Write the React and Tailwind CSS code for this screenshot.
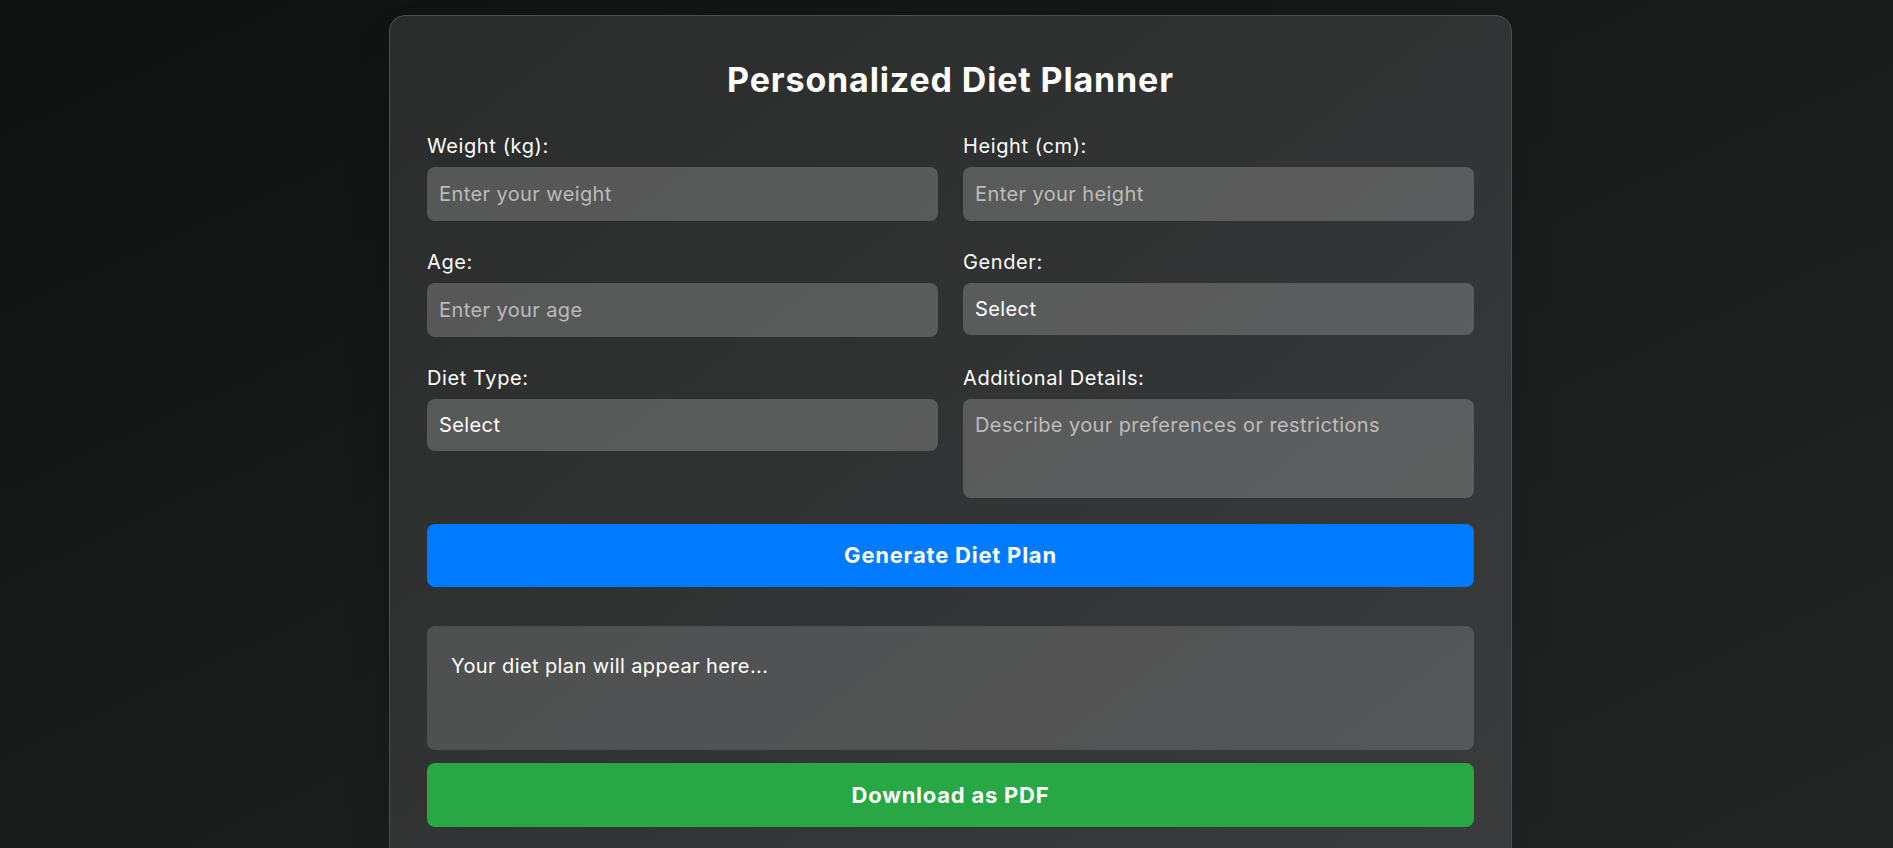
import { useState } from "react";

const font = { fontFamily: 'Inter, "Open Sans", sans-serif' };

function Field({ label, children }) {
  return (
    <div className="flex flex-col">
      <label className="text-[20px] leading-[28px] tracking-[0.03em] text-white mb-[7px]">{label}</label>
      {children}
    </div>
  );
}

export default function App() {
  const [form, setForm] = useState({ weight: "", height: "", age: "", gender: "", diet: "", details: "" });
  const set = (k) => (e) => setForm({ ...form, [k]: e.target.value });

  const inputCls =
    "h-[54px] w-full rounded-lg bg-white/20 px-3 text-[20px] tracking-[0.02em] text-white placeholder:text-white/60 outline-none";
  const selectCls =
    "h-[52px] w-full appearance-none rounded-lg bg-white/20 px-3 text-[20px] tracking-[0.02em] text-white outline-none";

  return (
    <div
      className="min-h-screen bg-gradient-to-br from-[#101111] to-[#242525] pl-[8px] pt-[15px] flex justify-center items-start"
      style={font}
    >
      <div className="w-[1123px] rounded-2xl border border-[#4d4e4e] bg-gradient-to-br from-[#2a2b2b] to-[#3a3b3c] px-[37px] pt-[40px] pb-10 shadow-2xl">
        <h1 className="text-center text-[34px] leading-[48px] tracking-[0.025em] font-bold text-white mb-[28px]">
          Personalized Diet Planner
        </h1>

        <div className="grid grid-cols-2 gap-x-[25px] gap-y-[27px] items-start">
          <Field label="Weight (kg):">
            <input className={inputCls} placeholder="Enter your weight" value={form.weight} onChange={set("weight")} />
          </Field>
          <Field label="Height (cm):">
            <input className={inputCls} placeholder="Enter your height" value={form.height} onChange={set("height")} />
          </Field>
          <Field label="Age:">
            <input className={inputCls} placeholder="Enter your age" value={form.age} onChange={set("age")} />
          </Field>
          <Field label="Gender:">
            <select className={selectCls} value={form.gender} onChange={set("gender")}>
              <option value="">Select</option>
              <option value="male">Male</option>
              <option value="female">Female</option>
            </select>
          </Field>
          <Field label="Diet Type:">
            <select className={selectCls} value={form.diet} onChange={set("diet")}>
              <option value="">Select</option>
              <option value="veg">Vegetarian</option>
              <option value="nonveg">Non-Vegetarian</option>
              <option value="vegan">Vegan</option>
            </select>
          </Field>
          <Field label="Additional Details:">
            <textarea
              className="h-[99px] w-full resize-none rounded-lg bg-white/20 px-3 py-[12px] text-[20px] leading-[28px] tracking-[0.02em] text-white placeholder:text-white/60 outline-none"
              placeholder="Describe your preferences or restrictions"
              value={form.details}
              onChange={set("details")}
            />
          </Field>
        </div>

        <button className="mt-[26px] h-[63px] w-full rounded-lg bg-[#007bff] text-[22px] tracking-[0.035em] font-bold text-white">
          Generate Diet Plan
        </button>

        <div className="mt-[39px] h-[124px] rounded-lg bg-white/15 px-6 pt-[26px] text-[20px] leading-[28px] tracking-[0.02em] text-white">
          Your diet plan will appear here...
        </div>

        <button className="mt-[13px] h-[64px] w-full rounded-lg bg-[#28a745] text-[22px] tracking-[0.035em] font-bold text-white">
          Download as PDF
        </button>
      </div>
    </div>
  );
}
